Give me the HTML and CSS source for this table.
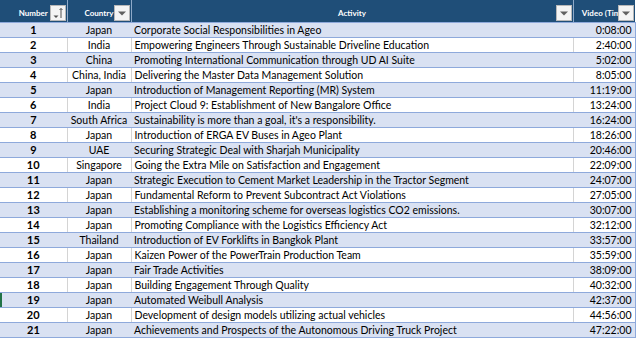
FILE: index.html
```html
<!DOCTYPE html>
<html lang="en">
<head>
  <meta charset="UTF-8" />
  <title>Video Index</title>
  <link rel="stylesheet" href="styles.css">
</head>
<body>
  <table class="sheet">
    <colgroup>
      <col class="col-num">
      <col class="col-country">
      <col class="col-activity">
      <col class="col-video">
    </colgroup>
    <thead>
      <tr>
        <th><div class="head-cell"><span class="head-label">Number</span><span class="filter-btn"><svg width="14" height="14" viewBox="0 0 14 14"><path d="M2.5 9.5h5l-2.5 2.5z" fill="#505050"/><path d="M10 2.5v9.5M8.5 4l1.5-1.5 1.5 1.5" stroke="#505050" stroke-width="1" fill="none"/></svg></span></div></th>
        <th><div class="head-cell"><span class="head-label">Country</span><span class="filter-btn"><svg width="14" height="14" viewBox="0 0 14 14"><path d="M3 5.5h8l-4 4z" fill="#606060"/></svg></span></div></th>
        <th><div class="head-cell"><span class="head-label">Activity</span><span class="filter-btn"><svg width="14" height="14" viewBox="0 0 14 14"><path d="M3 5.5h8l-4 4z" fill="#606060"/></svg></span></div></th>
        <th><div class="head-cell"><span class="head-label">Video (Time)</span><span class="filter-btn"><svg width="14" height="14" viewBox="0 0 14 14"><path d="M3 5.5h8l-4 4z" fill="#606060"/></svg></span></div></th>
      </tr>
    </thead>
    <tbody>
      <tr><td class="num">1</td><td class="country">Japan</td><td class="activity">Corporate Social Responsibilities in Ageo</td><td class="time">0:08:00</td></tr>
      <tr><td class="num">2</td><td class="country">India</td><td class="activity">Empowering Engineers Through Sustainable Driveline Education</td><td class="time">2:40:00</td></tr>
      <tr><td class="num">3</td><td class="country">China</td><td class="activity">Promoting International Communication through UD AI Suite</td><td class="time">5:02:00</td></tr>
      <tr><td class="num">4</td><td class="country">China, India</td><td class="activity">Delivering the Master Data Management Solution</td><td class="time">8:05:00</td></tr>
      <tr><td class="num">5</td><td class="country">Japan</td><td class="activity">Introduction of Management Reporting (MR) System</td><td class="time">11:19:00</td></tr>
      <tr><td class="num">6</td><td class="country">India</td><td class="activity">Project Cloud 9: Establishment of New Bangalore Office</td><td class="time">13:24:00</td></tr>
      <tr><td class="num">7</td><td class="country">South Africa</td><td class="activity">Sustainability is more than a goal, it's a responsibility.</td><td class="time">16:24:00</td></tr>
      <tr><td class="num">8</td><td class="country">Japan</td><td class="activity">Introduction of ERGA EV Buses in Ageo Plant</td><td class="time">18:26:00</td></tr>
      <tr><td class="num">9</td><td class="country">UAE</td><td class="activity">Securing Strategic Deal with Sharjah Municipality</td><td class="time">20:46:00</td></tr>
      <tr><td class="num">10</td><td class="country">Singapore</td><td class="activity">Going the Extra Mile on Satisfaction and Engagement</td><td class="time">22:09:00</td></tr>
      <tr><td class="num">11</td><td class="country">Japan</td><td class="activity">Strategic Execution to Cement Market Leadership in the Tractor Segment</td><td class="time">24:07:00</td></tr>
      <tr><td class="num">12</td><td class="country">Japan</td><td class="activity">Fundamental Reform to Prevent Subcontract Act Violations</td><td class="time">27:05:00</td></tr>
      <tr><td class="num">13</td><td class="country">Japan</td><td class="activity">Establishing a monitoring scheme for overseas logistics CO2 emissions.</td><td class="time">30:07:00</td></tr>
      <tr><td class="num">14</td><td class="country">Japan</td><td class="activity">Promoting Compliance with the Logistics Efficiency Act</td><td class="time">32:12:00</td></tr>
      <tr><td class="num">15</td><td class="country">Thailand</td><td class="activity">Introduction of EV Forklifts in Bangkok Plant</td><td class="time">33:57:00</td></tr>
      <tr><td class="num">16</td><td class="country">Japan</td><td class="activity">Kaizen Power of the PowerTrain Production Team</td><td class="time">35:59:00</td></tr>
      <tr><td class="num">17</td><td class="country">Japan</td><td class="activity">Fair Trade Activities</td><td class="time">38:09:00</td></tr>
      <tr><td class="num">18</td><td class="country">Japan</td><td class="activity">Building Engagement Through Quality</td><td class="time">40:32:00</td></tr>
      <tr class="selected"><td class="num">19</td><td class="country">Japan</td><td class="activity">Automated Weibull Analysis</td><td class="time">42:37:00</td></tr>
      <tr><td class="num">20</td><td class="country">Japan</td><td class="activity">Development of design models utilizing actual vehicles</td><td class="time">44:56:00</td></tr>
      <tr><td class="num">21</td><td class="country">Japan</td><td class="activity">Achievements and Prospects of the Autonomous Driving Truck Project</td><td class="time">47:22:00</td></tr>
    </tbody>
  </table>
</body>
</html>
```

FILE: styles.css
```css
body {
  margin: 0;
  background: #ffffff;
  font-family: Lato, "Liberation Sans", Arial, sans-serif;
  color: #000000;
}
.sheet {
  border-collapse: collapse;
  table-layout: fixed;
  width: 635px;
  font-size: 10.5px;
}
.col-num { width: 67px; }
.col-country { width: 64px; }
.col-activity { width: 442px; }
.col-video { width: 62px; }

.sheet th {
  height: 22px;
  padding: 0;
  background: #1f4e78;
  border-left: 1px solid #8ea9c8;
  border-bottom: 1px solid #8ea9db;
  color: #ffffff;
  font-size: 8px;
  font-weight: 700;
}
.sheet th:first-child { border-left: none; }
.head-cell {
  height: 22px;
  position: relative;
  overflow: hidden;
}
.head-label {
  display: block;
  text-align: center;
  white-space: nowrap;
  line-height: 22px;
  padding-top: 2px;
}
.filter-btn {
  position: absolute;
  right: 1px;
  top: 5px;
  width: 16px;
  height: 16px;
  background: #f4f4f4;
  border: 1px solid #b8b8b8;
  box-sizing: border-box;
  display: flex;
  align-items: center;
  justify-content: center;
}

.sheet td {
  height: 14px;
  padding: 0 3px;
  line-height: 14px;
  border-bottom: 1px solid #8ea9db;
  white-space: nowrap;
  overflow: hidden;
}
.sheet tbody tr:nth-child(odd) td { background: #d9e1f2; }
.sheet tbody tr:nth-child(even) td { border-left: 1px solid #d4d4d4; }
.sheet tbody tr:nth-child(even) td:first-child { border-left: none; }
.sheet tbody td:last-child { border-right: 1px solid #8ea9db; }

.num { text-align: center; font-weight: 700; font-size: 11px; }
.country { text-align: center; }
.activity { text-align: left; }
.time { text-align: right; }

.selected td:first-child { box-shadow: inset 2px 0 0 #217346; }
```
